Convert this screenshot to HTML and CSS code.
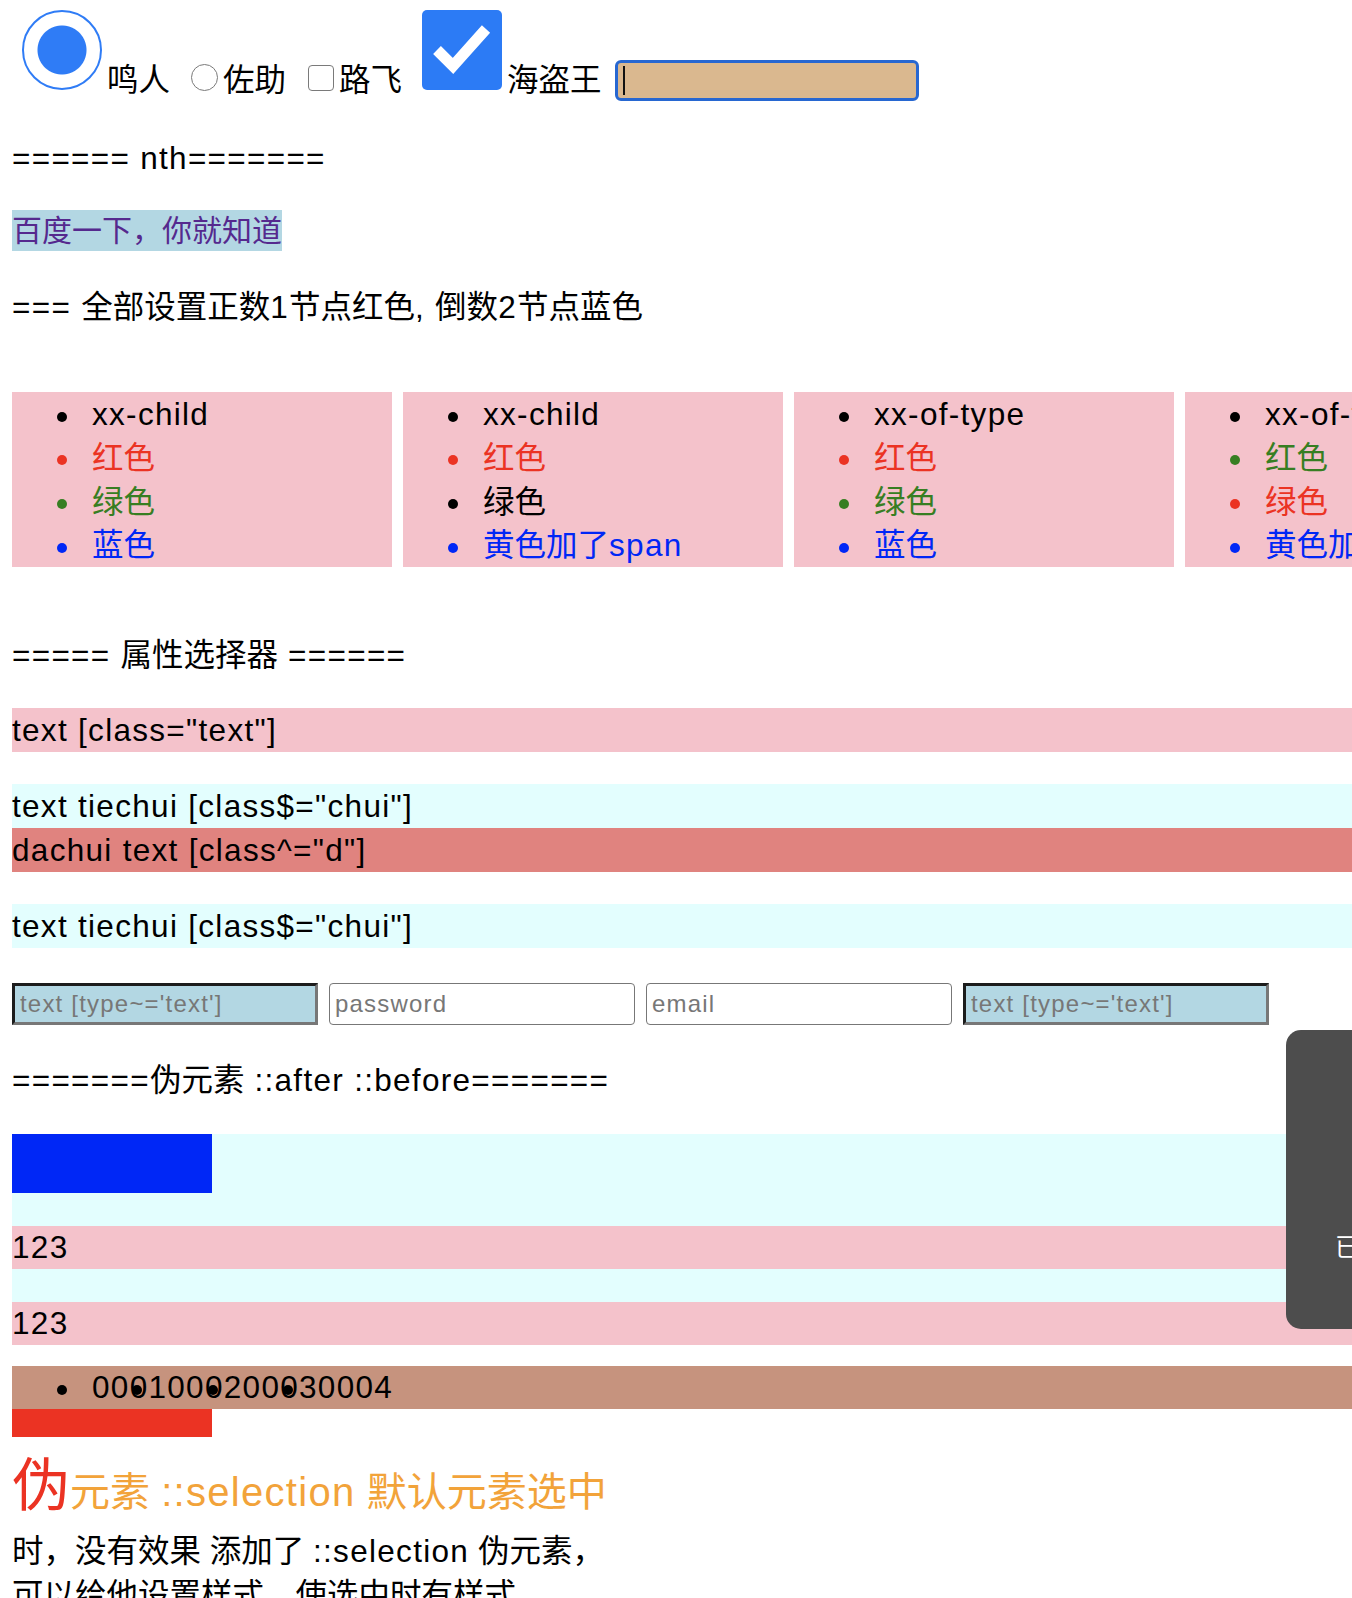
FILE: index.html
```html
<!DOCTYPE html>
<html lang="zh-CN">
<head>
<meta charset="utf-8">
<title>CSS 选择器练习</title>
<link rel="stylesheet" href="styles.css">
</head>
<body>
<div class="page">
  <div class="toprow">
    <input type="radio" class="radio-big" name="hero" checked aria-label="鸣人">
    <span class="label">鸣人</span>
    <input type="radio" class="radio-small" name="hero" aria-label="佐助">
    <span class="label">佐助</span>
    <input type="checkbox" class="check-small" aria-label="路飞">
    <span class="label">路飞</span>
    <span class="check-big" role="checkbox" aria-checked="true" aria-label="海盗王">
      <svg width="80" height="80" viewBox="0 0 80 80"><polyline points="15,40 31,56 64,19" fill="none" stroke="#fff" stroke-width="11"/></svg>
    </span>
    <span class="label">海盗王</span>
    <div class="text-focus" role="textbox"><span class="caret"></span></div>
  </div>

  <p class="line nth en">====== nth=======</p>
  <p class="baidu-line"><a class="baidu" href="#">百度一下，你就知道</a></p>
  <p class="line all"><span class="en">=== </span>全部设置正数<span class="en">1</span>节点红色<span class="en">, </span>倒数<span class="en">2</span>节点蓝色</p>

  <div class="boxes">
    <ul class="box">
      <li class="en">xx-child</li>
      <li class="red">红色</li>
      <li class="green">绿色</li>
      <li class="blue">蓝色</li>
    </ul>
    <ul class="box">
      <li class="en">xx-child</li>
      <li class="red">红色</li>
      <li>绿色</li>
      <li class="blue">黄色加了<span class="en">span</span></li>
    </ul>
    <ul class="box">
      <li class="en">xx-of-type</li>
      <li class="red">红色</li>
      <li class="green">绿色</li>
      <li class="blue">蓝色</li>
    </ul>
    <ul class="box">
      <li class="en">xx-of-type</li>
      <li class="green">红色</li>
      <li class="red">绿色</li>
      <li class="blue">黄色加了<span class="en">span</span></li>
    </ul>
  </div>

  <p class="line attr-title"><span class="en">===== </span>属性选择器<span class="en"> ======</span></p>

  <div class="row row-pink en">text [class="text"]</div>
  <div class="row row-cyan gap en">text tiechui [class$="chui"]</div>
  <div class="row row-coral en">dachui text [class^="d"]</div>
  <div class="row row-cyan gap en">text tiechui [class$="chui"]</div>

  <div class="inputs">
    <input type="text" class="inp inp-blue" placeholder="text [type~='text']">
    <input type="password" class="inp inp-plain" placeholder="password">
    <input type="email" class="inp inp-plain" placeholder="email">
    <input type="text" class="inp inp-blue" placeholder="text [type~='text']">
  </div>

  <p class="line pseudo-title"><span class="en">=======</span>伪元素<span class="en"> ::after ::before=======</span></p>

  <div class="pseudo-box">
    <p class="pink-row en">123</p>
    <p class="pink-row en">123</p>
  </div>

  <ul class="digits en">
    <li>0001</li><li>0002</li><li>0003</li><li>0004</li>
  </ul>
  <div class="red-bar"></div>

  <div class="selection-demo">伪元素 <span class="en">::selection</span> 默认元素选中时，没有效果 添加了 <span class="en">::selection</span> 伪元素，<br>可以给他设置样式，使选中时有样式</div>
</div>

<div class="toast">已复制</div>
</body>
</html>
```
FILE: styles.css
```css
html {
  overflow: hidden;
  background: #fff;
}

body {
  margin: 0;
  font-family: "Liberation Sans", "Noto Sans CJK SC", sans-serif;
  font-size: 31.5px;
  line-height: 44px;
  color: #000;
}

.page {
  padding-left: 12px;
}

p {
  margin: 0;
}

.en {
  letter-spacing: 1.3px;
}

/* ---------- top row ---------- */
.toprow {
  display: flex;
  align-items: flex-end;
  height: 102px;
}

.label {
  line-height: 44px;
}

.radio-big {
  appearance: none;
  box-sizing: border-box;
  width: 80px;
  height: 80px;
  margin: 0 5px 12px 10px;
  border: 2px solid #2f7cf6;
  border-radius: 50%;
  background: radial-gradient(circle, #2f7cf6 0 24px, #fff 25px);
}

.radio-small {
  appearance: none;
  box-sizing: border-box;
  width: 27px;
  height: 27px;
  margin: 0 5px 11px 21px;
  border: 1.5px solid #7a7a7a;
  border-radius: 50%;
  background: #fff;
}

.check-small {
  appearance: none;
  box-sizing: border-box;
  width: 26px;
  height: 26px;
  margin: 0 5px 11px 22px;
  border: 1.5px solid #7a7a7a;
  border-radius: 4px;
  background: #fff;
}

.check-big {
  display: block;
  width: 80px;
  height: 80px;
  margin: 0 5px 12px 20px;
  border-radius: 5px;
  background: #2c7bf5;
}

.check-big svg {
  display: block;
}

.text-focus {
  box-sizing: border-box;
  display: flex;
  align-items: center;
  width: 304px;
  height: 41px;
  margin: 0 0 1px 13px;
  padding-left: 5px;
  border: 3px solid #2767d1;
  border-radius: 6px;
  background: #dab88f;
}

.caret {
  width: 2px;
  height: 29px;
  background: #111;
}

/* ---------- text lines ---------- */
.line {
  height: 44px;
}

.nth {
  margin-top: 34px;
}

.baidu-line {
  margin-top: 30px;
  height: 41px;
  line-height: 41px;
}

.baidu {
  display: inline-block;
  font-size: 30px;
  background: #b3d7e3;
  color: #55298e;
  text-decoration: none;
}

.all {
  margin-top: 34px;
}

/* ---------- nth boxes ---------- */
.boxes {
  display: flex;
  gap: 11px;
  margin-top: 63px;
}

.box {
  flex: none;
  box-sizing: border-box;
  width: 380px;
  height: 175px;
  margin: 0;
  padding-left: 80px;
  line-height: 43.75px;
  list-style: none;
  background: #f4c2cb;
}

.box li {
  position: relative;
  top: 1px;
}

.box li::before,
.digits li::before {
  content: "";
  display: inline-block;
  width: 10px;
  height: 10px;
  margin: 0 25px 0 -35px;
  border-radius: 50%;
  background: currentColor;
  vertical-align: middle;
}

.red { color: #eb3323; }
.green { color: #377e22; }
.blue { color: #0027f6; }

/* ---------- attribute selectors ---------- */
.attr-title {
  margin-top: 66px;
}

.row {
  height: 44px;
}

.row-pink {
  margin-top: 31px;
  background: #f4c2cb;
}

.row-cyan {
  background: #e3fefe;
}

.row-cyan.gap {
  margin-top: 32px;
}

.row-coral {
  background: #e0837f;
}

.inputs {
  display: flex;
  gap: 11px;
  margin-top: 35px;
}

.inp {
  box-sizing: border-box;
  width: 306px;
  height: 42px;
  margin: 0;
  padding: 0 5px;
  font-family: "Liberation Sans", "Noto Sans CJK SC", sans-serif;
  font-size: 24px;
  letter-spacing: 1.2px;
  outline: none;
}

.inp::placeholder {
  color: #777;
}

.inp-blue {
  border: 3px solid;
  border-color: #1c1c1c #777 #777 #1c1c1c;
  background: #b3d7e3;
}

.inp-plain {
  border: 1.5px solid #777;
  border-radius: 4px;
  background: #fff;
}

/* ---------- pseudo elements ---------- */
.pseudo-title {
  margin-top: 33px;
}

.pseudo-box {
  margin-top: 32px;
  background: #e3fefe;
}

.pseudo-box::before {
  content: "";
  display: block;
  width: 200px;
  height: 59px;
  background: #0027f6;
}

.pink-row {
  height: 43px;
  line-height: 43px;
  margin-top: 33px;
  background: #f4c2cb;
}

.digits {
  display: flow-root;
  height: 43px;
  margin: 21px 0 0;
  padding-left: 80px;
  line-height: 43px;
  list-style: none;
  background: #c6937e;
}

.digits li {
  float: left;
}

.red-bar {
  width: 200px;
  height: 28px;
  background: #eb3323;
}

.selection-demo {
  width: 620px;
  margin-top: 12px;
}

.selection-demo::first-line {
  color: #f2a33a;
  font-size: 40px;
  line-height: 73px;
}

.selection-demo::first-letter {
  color: #eb3323;
  font-size: 58px;
}

/* ---------- floating toast ---------- */
.toast {
  position: fixed;
  left: 1286px;
  top: 1030px;
  box-sizing: border-box;
  width: 200px;
  height: 299px;
  padding: 200px 0 0 49px;
  border-radius: 15px;
  background: #4d4d4d;
  color: #fff;
  font-family: "Noto Sans CJK SC", sans-serif;
  font-size: 25px;
  line-height: 30px;
}
```
